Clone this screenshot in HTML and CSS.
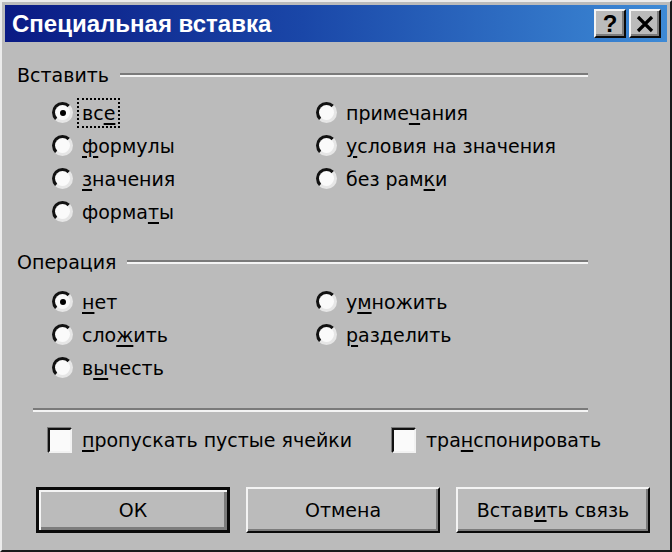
FILE: index.html
```html
<!DOCTYPE html>
<html lang="ru">
<head>
    <meta charset="UTF-8" />
    <title>Специальная вставка</title>
    <link rel="stylesheet" href="styles.css">
</head>
<body>
    <div class="window">
        <div class="titlebar">
            <span class="title">Специальная вставка</span>
            <div class="title-buttons">
                <span class="tbtn help">?</span>
                <span class="tbtn close">
                    <svg width="18" height="18" viewBox="0 0 18 18">
                        <path d="M2 2 L16 16 M16 2 L2 16" stroke="#000" stroke-width="3.2" />
                    </svg>
                </span>
            </div>
        </div>

        <div class="content">
            <div class="group-head"><span>Вставить</span><span class="etch"></span></div>
            <div class="options">
                <div class="col">
                    <div class="opt"><span class="radio checked"></span><span class="focus">вс<u>е</u></span></div>
                    <div class="opt"><span class="radio"></span><span><u>ф</u>ормулы</span></div>
                    <div class="opt"><span class="radio"></span><span><u>з</u>начения</span></div>
                    <div class="opt"><span class="radio"></span><span>форма<u>т</u>ы</span></div>
                </div>
                <div class="col">
                    <div class="opt"><span class="radio"></span><span>приме<u>ч</u>ания</span></div>
                    <div class="opt"><span class="radio"></span><span><u>у</u>словия на значения</span></div>
                    <div class="opt"><span class="radio"></span><span>без рам<u>к</u>и</span></div>
                </div>
            </div>

            <div class="group-head second"><span>Операция</span><span class="etch"></span></div>
            <div class="options ops">
                <div class="col">
                    <div class="opt"><span class="radio checked"></span><span><u>н</u>ет</span></div>
                    <div class="opt"><span class="radio"></span><span>сло<u>ж</u>ить</span></div>
                    <div class="opt"><span class="radio"></span><span>в<u>ы</u>честь</span></div>
                </div>
                <div class="col">
                    <div class="opt"><span class="radio"></span><span>у<u>м</u>ножить</span></div>
                    <div class="opt"><span class="radio"></span><span><u>р</u>азделить</span></div>
                </div>
            </div>

            <div class="separator"></div>

            <div class="checks">
                <div class="chk"><span class="box"></span><span><u>п</u>ропускать пустые ячейки</span></div>
                <div class="chk"><span class="box"></span><span>тра<u>н</u>спонировать</span></div>
            </div>

            <div class="buttons">
                <div class="btn default">ОК</div>
                <div class="btn">Отмена</div>
                <div class="btn">Встав<u>и</u>ть связь</div>
            </div>
        </div>
    </div>
</body>
</html>
```

FILE: styles.css
```css
:root {
    --face: #bbbbbb;
    --light: #f4f4f4;
    --shadow: #7c7c7c;
    --dark: #0a0a0a;
}
body {
    margin: 0;
    background: var(--face);
    font-family: 'DejaVu Sans', sans-serif;
    font-size: 19px;
    color: #000;
}
.window {
    width: 672px;
    height: 552px;
    box-sizing: border-box;
    padding: 3px;
    background: var(--face);
    border: 2px solid;
    border-color: #ececec #1a1a1a #1a1a1a #ececec;
}
.titlebar {
    height: 37px;
    display: flex;
    align-items: center;
    justify-content: space-between;
    padding: 0 6px 0 7px;
    background: linear-gradient(to right, #0a1a84 0%, #1a47a8 45%, #3d8ad6 100%);
}
.title {
    font-family: 'Liberation Sans', sans-serif;
    font-weight: bold;
    font-size: 24px;
    color: #fff;
}
.title-buttons {
    display: flex;
    gap: 3px;
}
.tbtn {
    width: 32px;
    height: 29px;
    box-sizing: border-box;
    display: flex;
    align-items: center;
    justify-content: center;
    background: var(--face);
    border: 2px solid;
    border-color: var(--light) var(--dark) var(--dark) var(--light);
    box-shadow: inset -2px -2px 0 var(--shadow);
}
.tbtn.help {
    font-family: 'Liberation Sans', sans-serif;
    font-weight: bold;
    font-size: 24px;
}
.content {
    padding: 22px 0 0 12px;
}
u {
    text-decoration-thickness: 2px;
    text-underline-offset: 3px;
}
.group-head {
    display: flex;
    align-items: center;
    height: 22px;
    line-height: 22px;
    margin-right: 79px;
}
.group-head.second {
    margin-top: 23px;
}
.etch {
    flex: 1;
    height: 0;
    margin-left: 11px;
    border-top: 2px solid #7a7a7a;
    border-bottom: 2px solid var(--light);
}
.options {
    display: grid;
    grid-template-columns: 264px 1fr;
    padding-left: 35px;
    margin-top: 10px;
}
.options.ops {
    margin-top: 12px;
}
.opt {
    height: 33px;
    display: flex;
    align-items: center;
    gap: 9px;
}
.radio {
    width: 21px;
    height: 21px;
    box-sizing: border-box;
    border-radius: 50%;
    border: 3px solid;
    border-color: #111 #e6e6e6 #e6e6e6 #111;
    background: #fafafa;
    display: flex;
    align-items: center;
    justify-content: center;
}
.radio.checked::after {
    content: '';
    width: 6px;
    height: 6px;
    border-radius: 50%;
    background: #000;
}
.focus {
    outline: 2px dotted #000;
    outline-offset: 1px;
    padding: 1px 2px;
    margin-left: -2px;
}
.separator {
    margin: 24px 79px 0 16px;
    border-top: 2px solid #7a7a7a;
    border-bottom: 2px solid var(--light);
}
.checks {
    display: grid;
    grid-template-columns: 344px 1fr;
    padding-left: 31px;
    margin-top: 13px;
}
.chk {
    height: 30px;
    display: flex;
    align-items: center;
    gap: 10px;
}
.box {
    width: 24px;
    height: 25px;
    box-sizing: border-box;
    border: 2px solid;
    border-color: #111 #f2f2f2 #f2f2f2 #111;
    box-shadow: -1px -1px 0 #7a7a7a;
    background: #fafafa;
}
.buttons {
    display: flex;
    gap: 16px;
    margin: 32px 0 0 19px;
}
.btn {
    width: 194px;
    height: 46px;
    box-sizing: border-box;
    display: flex;
    align-items: center;
    justify-content: center;
    background: var(--face);
    border: 2px solid;
    border-color: var(--light) var(--dark) var(--dark) var(--light);
    box-shadow: inset -2px -2px 0 var(--shadow);
}
.btn.default {
    border: 3px solid var(--dark);
    box-shadow: inset 2px 2px 0 var(--light), inset -3px -3px 0 var(--shadow);
}
```
